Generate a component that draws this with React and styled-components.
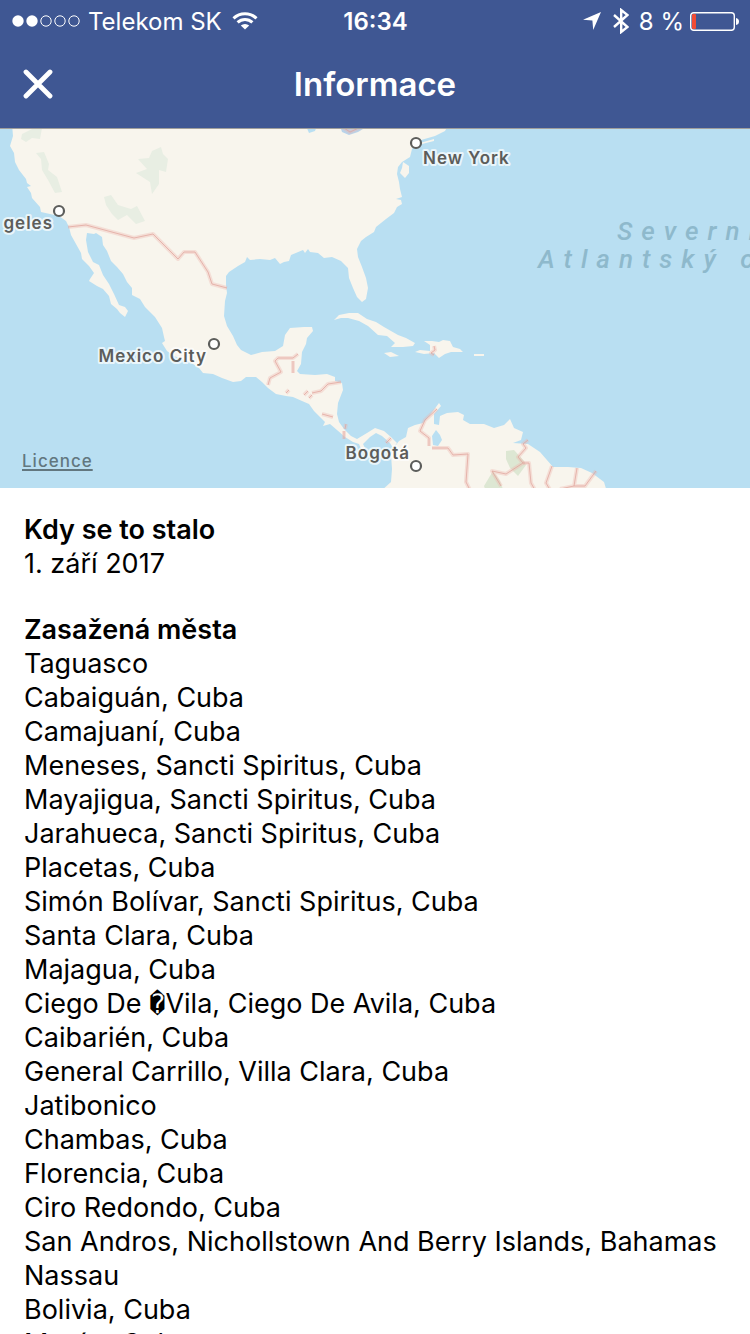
import styled, { createGlobalStyle } from "styled-components";

const cities = [
  "Taguasco",
  "Cabaiguán, Cuba",
  "Camajuaní, Cuba",
  "Meneses, Sancti Spiritus, Cuba",
  "Mayajigua, Sancti Spiritus, Cuba",
  "Jarahueca, Sancti Spiritus, Cuba",
  "Placetas, Cuba",
  "Simón Bolívar, Sancti Spiritus, Cuba",
  "Santa Clara, Cuba",
  "Majagua, Cuba",
  "Ciego De \uFFFDVila, Ciego De Avila, Cuba",
  "Caibarién, Cuba",
  "General Carrillo, Villa Clara, Cuba",
  "Jatibonico",
  "Chambas, Cuba",
  "Florencia, Cuba",
  "Ciro Redondo, Cuba",
  "San Andros, Nichollstown And Berry Islands, Bahamas",
  "Nassau",
  "Bolivia, Cuba",
  "Morón, Cuba",
];

const pins = [
  { name: "geles", x: 59, y: 83, labelX: 53, labelY: 101, anchor: "end" },
  { name: "New York", x: 416, y: 15, labelX: 423, labelY: 36, anchor: "start" },
  { name: "Mexico City", x: 214, y: 216, labelX: 207, labelY: 234, anchor: "end" },
  { name: "Bogotá", x: 416, y: 338, labelX: 410, labelY: 331, anchor: "end" },
];

const land = [
  // north and central america
  "M12 -4 L13 8 L10 18 L14 25 L15 34 L19 42 L26 51 L27 55 L31 58 L27 59 L31 65 L32 70 L40 79 L41 84 L50 86 L59 88 L66 93 L69 99 L71 107 L76 116 L81 125 L82 131 L89 138 L94 145 L90 151 L89 153 L97 158 L103 161 L109 168 L111 176 L117 181 L120 185 L125 189 L128 183 L125 179 L119 177 L114 166 L109 156 L103 147 L99 137 L93 134 L88 124 L86 112 L87 105 L94 106 L96 105 L102 109 L103 117 L107 123 L111 133 L117 139 L123 146 L127 154 L132 160 L132 167 L140 171 L145 179 L155 189 L162 200 L164 209 L165 213 L162 215 L167 223 L174 228 L190 234 L199 240 L203 245 L213 246 L222 250 L233 254 L241 253 L246 249 L256 249 L262 254 L268 260 L276 266 L286 268 L293 269 L302 273 L309 276 L314 283 L321 290 L325 294 L323 298 L330 296 L337 302 L345 309 L353 314 L359 316 L362 323 L367 324 L363 316 L370 309 L376 305 L382 308 L390 315 L393 320 L397 315 L391 309 L384 303 L375 300 L367 305 L357 311 L351 308 L344 301 L339 294 L337 286 L338 275 L343 262 L342 255 L335 253 L335 249 L327 246 L315 247 L300 246 L297 243 L301 236 L302 224 L306 216 L307 210 L313 203 L312 199 L304 199 L290 200 L285 207 L283 218 L275 223 L262 224 L251 227 L241 222 L237 217 L233 208 L227 198 L224 188 L225 173 L227 165 L226 157 L226 148 L229 144 L238 138 L245 134 L247 129 L250 132 L260 131 L270 132 L275 130 L280 136 L284 134 L289 133 L291 127 L303 122 L305 125 L308 121 L310 124 L318 125 L324 130 L332 129 L341 133 L348 140 L349 150 L353 160 L357 169 L362 174 L366 171 L368 160 L366 150 L362 139 L358 129 L357 121 L361 113 L366 109 L374 104 L376 99 L386 91 L394 85 L397 79 L402 76 L401 72 L396 71 L402 69 L400 61 L399 54 L397 46 L398 39 L402 34 L410 29 L412 21 L416 15 L421 12 L435 8 L445 3 L449 -4 Z",
  // east coast capes and long island
  "M403 34 L409 38 L409 45 L405 50 L400 45 L402 40 Z",
  "M420 15 L434 11 L434 13 L422 16 Z",
  // cuba
  "M334 192 L339 187 L349 185 L358 185 L367 191 L376 194 L384 199 L391 203 L398 207 L406 210 L415 215 L413 218 L403 219 L391 219 L395 215 L387 208 L378 207 L368 198 L359 193 L348 190 L341 190 Z",
  // jamaica, puerto rico, hispaniola
  "M384 225 L391 224 L399 228 L390 229 Z",
  "M474 226 L484 226 L484 228 L474 228 Z",
  "M424 213 L432 213 L439 214 L443 212 L450 213 L453 219 L460 221 L463 224 L451 224 L445 226 L439 230 L434 225 L424 226 L415 224 L420 222 L430 223 L430 217 Z",
  // south america
  "M380 364 L391 354 L392 341 L391 327 L393 321 L399 313 L406 309 L408 300 L415 297 L423 295 L430 287 L439 275 L441 278 L434 286 L434 296 L439 297 L440 288 L447 285 L458 284 L464 287 L463 292 L470 296 L484 296 L494 300 L504 297 L510 291 L514 300 L523 304 L521 312 L513 315 L528 316 L540 324 L553 339 L568 339 L581 340 L592 345 L604 354 L607 364 Z",
];

const woods = [
  "M138 31 L149 30 L152 23 L161 19 L163 26 L168 31 L166 44 L159 42 L159 56 L152 66 L150 54 L136 45 L147 41 Z",
  "M104 69 L111 67 L118 77 L131 81 L137 78 L145 93 L136 96 L127 87 L118 92 L112 86 L106 77 Z",
  "M36 25 L44 24 L49 36 L48 42 L57 49 L62 64 L55 65 L48 52 L42 42 L41 31 Z",
  "M22 6 L34 0 L42 0 L40 11 L32 10 L26 14 L21 11 Z",
];

const rainforest = [
  "M506 323 L514 322 L524 333 L526 337 L518 348 L510 340 L506 331 Z",
  "M493 343 L484 358 L486 364 L504 364 L500 353 Z",
];

const borders = [
  "M68 99 L86 97 L134 110 L153 106 L178 131 L184 124 L195 124 L208 144 L212 156 L227 160",
  "M268 257 L270 250 L281 244 L275 233 L278 230 L293 230 L298 226 M293 233 L293 245",
  "M286 265 L289 262 M304 267 L308 263 M309 270 L312 267 M312 265 L321 263 L328 256 L341 254",
  "M322 286 L333 289 M345 301 L346 296 M344 311 L344 303 M386 315 L391 310",
  "M437 281 L425 292 L420 303 L429 310 L429 318",
  "M432 320 L448 320 L453 327 L468 326 L466 354 L470 362",
  "M528 312 L523 316 L526 320 L518 329 L523 335 L506 346 L492 343 L501 358",
  "M523 335 L529 335 L531 355 L535 362 M552 338 L546 355 L555 370",
  "M577 340 L574 358 L585 358 L596 343 M560 361 L574 358",
  "M434 218 L435 222 L431 225 L434 227",
  "M341 -2 L350 4 L363 -2",
];

function Pin({ pin }) {
  return (
    <g>
      <circle cx={pin.x} cy={pin.y} r="5" fill="#fff" stroke="#5c5d5b" strokeWidth="2.2" />
      <CityLabel x={pin.labelX} y={pin.labelY} textAnchor={pin.anchor}>
        {pin.name}
      </CityLabel>
    </g>
  );
}

function StormMap() {
  return (
    <MapPanel>
      <MapDrawing viewBox="0 0 750 360" preserveAspectRatio="xMidYMid slice">
        {land.map((d) => (
          <path key={d} d={d} fill="#f8f5ed" />
        ))}
        {woods.map((d) => (
          <path key={d} d={d} fill="#e8eee3" />
        ))}
        {rainforest.map((d) => (
          <path key={d} d={d} fill="#dde7d3" />
        ))}
        {/* lakes */}
        <path d="M306 -2 L317 -2 L315 3 L309 5 Z" fill="#b9dff2" />
        <path d="M340 -2 L368 -2 L358 4 L349 7 L342 4 Z" fill="#b9d3ea" />
        <path d="M436 302 L440 307 L442 312 L438 318 L433 317 L432 308 Z" fill="#b9dff2" />
        {borders.map((d) => (
          <g key={d} fill="none" strokeLinejoin="round">
            <path d={d} stroke="#efb5ad" strokeOpacity="0.35" strokeWidth="4" />
            <path d={d} stroke="#e0a198" strokeOpacity="0.7" strokeWidth="1" />
          </g>
        ))}
        <OceanLabel x="617" y="112">Severní</OceanLabel>
        <OceanLabel x="538" y="140">Atlantský oceán</OceanLabel>
        {pins.map((pin) => (
          <Pin key={pin.name} pin={pin} />
        ))}
      </MapDrawing>
      <Licence href="#licence">Licence</Licence>
    </MapPanel>
  );
}

// the broken character sits narrower than the letters around it
function CityName({ name }) {
  const [before, after] = name.split("\uFFFD");
  if (after === undefined) return name;
  return (
    <>
      {before}
      <Unknown>{"\uFFFD"}</Unknown>
      {after}
    </>
  );
}

function App() {
  return (
    <>
      <GlobalStyle />
      <Header>
        <StatusBar>
          <StatusGroup>
            <svg width="68" height="12" viewBox="0 0 68 12" fill="none" stroke="#fff">
              <circle cx="6" cy="6" r="5.7" fill="#fff" stroke="none" />
              <circle cx="20" cy="6" r="5.7" fill="#fff" stroke="none" />
              <circle cx="34" cy="6" r="5.2" />
              <circle cx="48" cy="6" r="5.2" />
              <circle cx="62" cy="6" r="5.2" />
            </svg>
            <Carrier>Telekom SK</Carrier>
            <svg width="26" height="18" viewBox="0 0 26 18" fill="none" stroke="#fff" strokeWidth="3">
              <path d="M1.5 6.3 A16.5 16.5 0 0 1 24.5 6.3" />
              <path d="M5.6 10.4 A10.6 10.6 0 0 1 20.4 10.4" />
              <path d="M13 17.6 L8.8 13.6 A6 6 0 0 1 17.2 13.6 Z" fill="#fff" stroke="none" />
            </svg>
          </StatusGroup>
          <Clock>16:34</Clock>
          <StatusGroup $end>
            <svg width="18" height="18" viewBox="0 0 18 18" fill="#fff">
              <path d="M18 0 L10.2 18 L9.4 8.6 L0 7.8 Z" />
            </svg>
            <Bluetooth width="16" height="26" viewBox="0 0 16 26" fill="none" stroke="#fff" strokeWidth="2.4">
              <path d="M1 7 L14.5 19 L8.2 24 V2 L14.5 7 L1 19" />
            </Bluetooth>
            <Percent>8 %</Percent>
            <svg width="49" height="19" viewBox="0 0 49 19" fill="none">
              <rect x="0.7" y="0.7" width="43.6" height="17.6" rx="3" stroke="#fff" strokeWidth="1.4" />
              <rect x="2" y="2" width="4" height="15" rx="1" fill="#f04b35" />
              <path d="M46 6 Q49 6.5 49 9.5 Q49 12.5 46 13 Z" fill="#fff" />
            </svg>
          </StatusGroup>
        </StatusBar>
        <NavBar>
          <CloseButton aria-label="Zavřít">
            <svg width="30" height="30" viewBox="0 0 30 30" stroke="#fff" strokeWidth="4.8" strokeLinecap="round">
              <path d="M3 3 L27 27 M27 3 L3 27" />
            </svg>
          </CloseButton>
          <Title>Informace</Title>
        </NavBar>
      </Header>
      <StormMap />
      <Content>
        <section>
          <Heading>Kdy se to stalo</Heading>
          <Line>1. září 2017</Line>
        </section>
        <section>
          <Heading>Zasažená města</Heading>
          <CityList>
            {cities.map((city) => (
              <li key={city}>
                <CityName name={city} />
              </li>
            ))}
          </CityList>
        </section>
      </Content>
    </>
  );
}

const GlobalStyle = createGlobalStyle`
  * {
    box-sizing: border-box;
  }

  html {
    scrollbar-width: none;
  }

  body {
    margin: 0;
    background: white;
    color: black;
    font-family: Inter, "Liberation Sans", sans-serif;
  }
`;

const Header = styled.header`
  position: relative;
  z-index: 1;
  background: #3f5793;
  color: white;
  box-shadow: 0 1px #a09f9c;
`;

const StatusBar = styled.div`
  display: grid;
  grid-template-columns: 1fr auto 1fr;
  align-items: center;
  height: 40px;
  padding: 2px 11px 0 12px;
  font-size: 24px;
`;

const StatusGroup = styled.div`
  display: flex;
  align-items: center;
  gap: ${(props) => (props.$end ? "6px" : "8px")};
  justify-content: ${(props) => (props.$end ? "flex-end" : "flex-start")};
`;

const Carrier = styled.span`
  margin-right: 2px;
`;

const Clock = styled.time`
  font-weight: 600;
`;

const Bluetooth = styled.svg`
  margin: 0 4px 0 6px;
`;

const Percent = styled.span`
  white-space: nowrap;
`;

const NavBar = styled.div`
  display: grid;
  grid-template-columns: 1fr auto 1fr;
  align-items: center;
  height: 88px;
  padding: 0 23px;
`;

const CloseButton = styled.button`
  display: flex;
  justify-self: start;
  padding: 0;
  border: none;
  background: none;
  cursor: pointer;
`;

const Title = styled.h1`
  margin: 0;
  font-size: 33px;
  font-weight: 600;
`;

const MapPanel = styled.div`
  position: relative;
  background: #b9dff2;
`;

const MapDrawing = styled.svg`
  display: block;
  width: 100%;
  height: auto;
`;

const CityLabel = styled.text`
  fill: #5c5d5b;
  stroke: white;
  stroke-opacity: 0.7;
  stroke-width: 4px;
  stroke-linejoin: round;
  paint-order: stroke;
  font-size: 17px;
  font-weight: 600;
  letter-spacing: 1px;
`;

const OceanLabel = styled.text`
  fill: #8eb9cc;
  font-family: Roboto, "Liberation Sans", sans-serif;
  font-size: 26px;
  font-style: italic;
  font-weight: 500;
  letter-spacing: 9px;
`;

const Licence = styled.a`
  position: absolute;
  left: 22px;
  bottom: 17px;
  color: #62777f;
  font-size: 17px;
  font-weight: 500;
  letter-spacing: 1px;
  text-underline-offset: 2px;
  text-decoration-thickness: 2px;
`;

const Content = styled.main`
  display: flex;
  flex-direction: column;
  gap: 32px;
  padding: 25px 24px;
  font-size: 27px;
  line-height: 34px;
`;

const Heading = styled.h2`
  margin: 0;
  font-size: 27px;
  font-weight: 600;
`;

const Line = styled.p`
  margin: 0;
`;

const CityList = styled.ul`
  margin: 0;
  padding: 0;
  list-style: none;
`;

const Unknown = styled.span`
  font-family: "Liberation Mono", monospace;
  line-height: 1;
`;

export default App;
